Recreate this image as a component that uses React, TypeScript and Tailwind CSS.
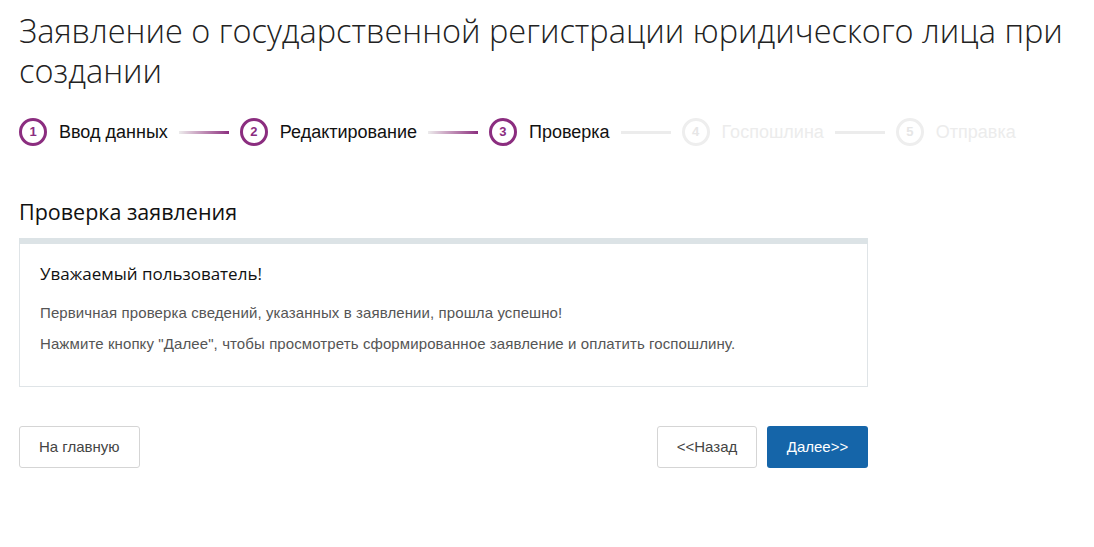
import React from "react";

const steps = [
  { n: 1, label: "Ввод данных", active: true },
  { n: 2, label: "Редактирование", active: true },
  { n: 3, label: "Проверка", active: true },
  { n: 4, label: "Госпошлина", active: false },
  { n: 5, label: "Отправка", active: false },
];

function Step({ n, label, active }: { n: number; label: string; active: boolean }) {
  return (
    <div className="flex items-center">
      <div
        className={
          active
            ? "flex h-[28px] w-[28px] items-center justify-center rounded-full border-[3px] border-[#8b2d7f] text-[13px] font-bold text-[#8b2d7f]"
            : "flex h-[28px] w-[28px] items-center justify-center rounded-full border-[3px] border-[#eeeeee] text-[13px] font-bold text-[#e6e6e6]"
        }
      >
        {n}
      </div>
      <span
        className={
          active
            ? "ml-[12px] text-[18px] text-[#111]"
            : "ml-[12px] text-[18px] text-[#ececec]"
        }
      >
        {label}
      </span>
    </div>
  );
}

function Connector({ active }: { active: boolean }) {
  return (
    <div
      className={
        active
          ? "mx-[11px] h-[3px] w-[50px] bg-gradient-to-r from-[#ececec] to-[#8b2d7f]"
          : "mx-[11px] h-[3px] w-[50px] bg-[#ececec]"
      }
    />
  );
}

export default function App() {
  return (
    <div className="min-h-[547px] bg-white px-[19px] pt-[11px] font-['Liberation_Sans',Arial,sans-serif]">
      <h1 className="font-['Open_Sans',sans-serif] text-[32.5px] font-light leading-[40px] text-[#222]">
        Заявление о государственной регистрации юридического лица при создании
      </h1>

      <div className="mt-[27px] flex items-center">
        {steps.map((s, i) => (
          <React.Fragment key={s.n}>
            {i > 0 && <Connector active={s.active} />}
            <Step {...s} />
          </React.Fragment>
        ))}
      </div>

      <h2 className="mt-[52px] font-['Open_Sans',sans-serif] text-[21.5px] leading-[28px] text-[#111]">
        Проверка заявления
      </h2>

      <div className="mt-[12px] w-[849px] border border-t-0 border-[#dfe4e7]">
        <div className="-mx-px h-[6px] bg-[#dce3e6]" />
        <div className="px-[20px] pt-[18px] pb-[32px]">
          <div className="font-['Open_Sans',sans-serif] text-[17px] leading-[24px] text-[#111]">
            Уважаемый пользователь!
          </div>
          <p className="mt-[17px] text-[15px] tracking-[0.1px] leading-[20px] text-[#555]">
            Первичная проверка сведений, указанных в заявлении, прошла успешно!
          </p>
          <p className="mt-[11px] text-[15px] tracking-[0.1px] leading-[20px] text-[#555]">
            Нажмите кнопку "Далее", чтобы просмотреть сформированное заявление и оплатить госпошлину.
          </p>
        </div>
      </div>

      <div className="mt-[39px] flex w-[849px] items-center">
        <button className="h-[42px] rounded-[3px] border border-[#d5d5d5] bg-white px-[19px] text-[15px] text-[#444]">
          На главную
        </button>
        <div className="ml-auto flex gap-[10px]">
          <button className="h-[42px] w-[100px] rounded-[3px] border border-[#d5d5d5] bg-white text-[15px] text-[#444]">
            &lt;&lt;Назад
          </button>
          <button className="h-[42px] w-[101px] rounded-[3px] bg-[#1565a9] text-[15px] text-white">
            Далее&gt;&gt;
          </button>
        </div>
      </div>
    </div>
  );
}
